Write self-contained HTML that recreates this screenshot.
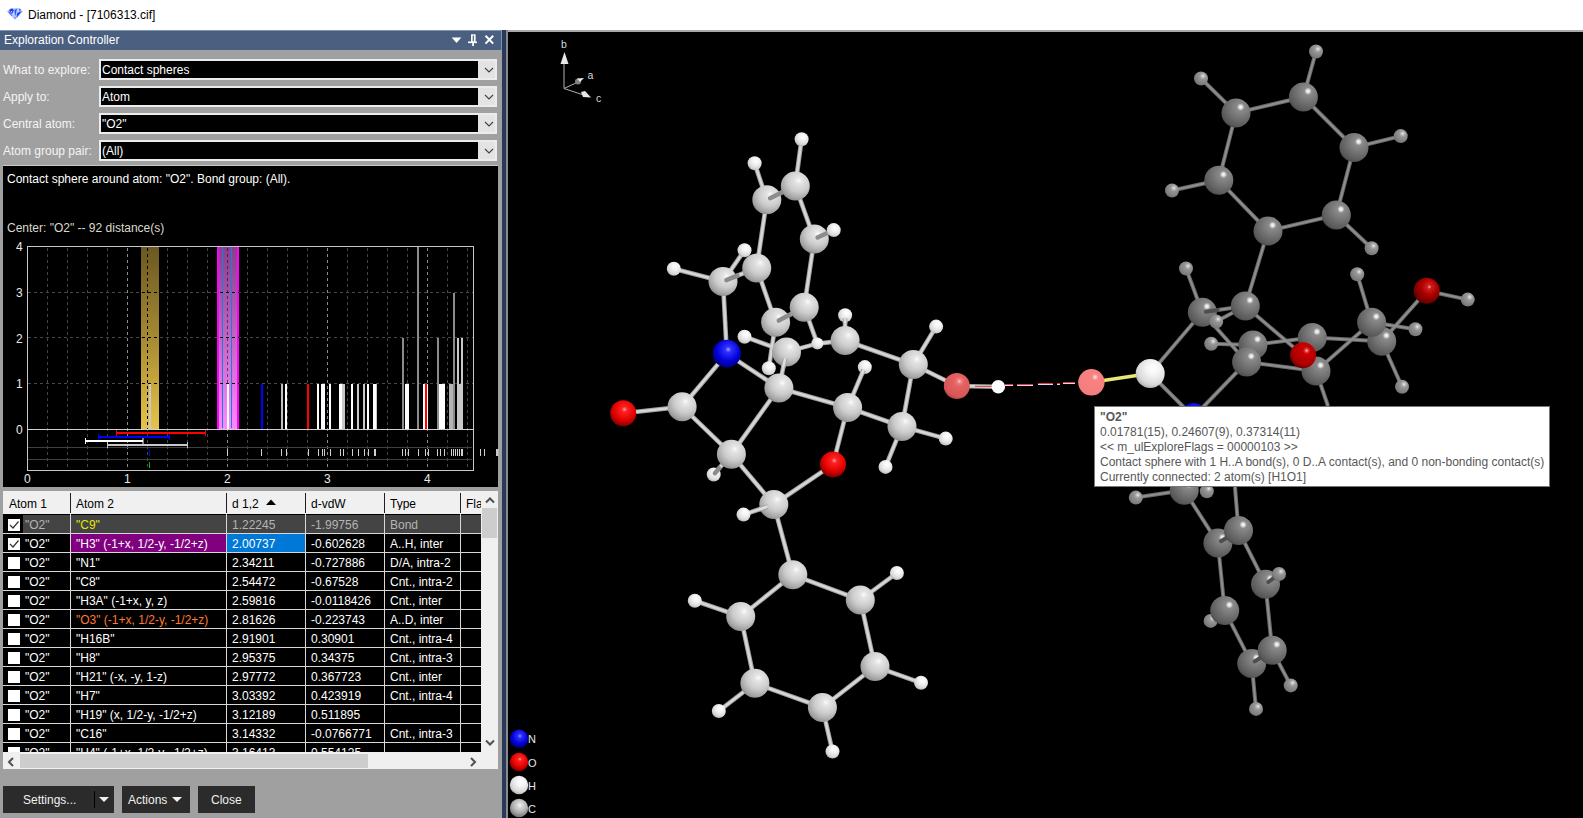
<!DOCTYPE html><html><head><meta charset="utf-8"><style>
*{box-sizing:border-box}
body{margin:0;width:1583px;height:818px;overflow:hidden;position:relative;background:#fff;font-family:"Liberation Sans", sans-serif;font-size:12px}
.a{position:absolute}
.t{position:absolute;white-space:nowrap;line-height:1}
.combo{position:absolute;left:99px;width:398px;height:21px;background:#e3e3e3;border:2px solid #ececec}
.combo .in{position:absolute;left:0;top:0;width:377px;height:17px;background:#000;color:#fff}
.combo .in span{position:absolute;left:1px;top:3px;line-height:1}
.combo svg{position:absolute;left:383px;top:6px}
.lbl{position:absolute;left:3px;color:#f4f4f4;line-height:1}
.btn{position:absolute;top:786px;height:27px;background:#2b2b2b;color:#f0f0f0}
.btn span{position:absolute;top:8px;line-height:1}
</style></head><body>
<div class="a" style="left:0;top:0;width:1583px;height:30px;background:#fff"></div>
<svg class="a" style="left:0;top:0" width="30" height="30" viewBox="0 0 30 30">
<polygon points="7,11.5 10.5,8 19.5,8 23,11.5 15,19.8" fill="#b8d4ff"/>
<polygon points="9,10 12,8.5 14,10 12,14 10,12" fill="#3030e0"/>
<polygon points="7.5,11.5 10,12 13,16.5 11,15.5" fill="#5070ff"/>
<polygon points="14.5,10 17,8.5 16,13 15,17" fill="#2a50ff"/>
<polygon points="17,13 22,11 16.5,18" fill="#1f45ff"/>
<polygon points="19,8.5 21,9.5 19.5,12" fill="#4060ff"/>
<polygon points="13.5,17 16,17 15,19.8" fill="#9a8cff"/>
<polygon points="10.5,11 12.5,11.5 11.5,12.5" fill="#e8f4ff"/>
</svg>
<div class="t" style="left:28px;top:9px;font-size:12px;color:#000">Diamond - [7106313.cif]</div>
<div class="a" style="left:0;top:30px;width:502px;height:788px;background:#a0a0a0"></div>
<div class="a" style="left:0;top:30px;width:502px;height:20px;background:#4b5f80;border-top:1px solid #7d93b8"></div>
<div class="a" style="left:501px;top:30px;width:1px;height:20px;background:#7d93b8"></div>
<div class="t" style="left:4px;top:34px;color:#fff">Exploration Controller</div>
<svg class="a" style="left:450px;top:34px" width="48" height="13" viewBox="0 0 48 13">
<polygon points="1.7,3.5 11.3,3.5 6.5,9" fill="#fff"/>
<rect x="21" y="0.3" width="4.6" height="7.6" fill="#fff"/><rect x="22.7" y="1.5" width="1.2" height="5.6" fill="#4b5f80"/>
<rect x="18" y="7.5" width="9" height="1.6" fill="#fff"/><rect x="22.2" y="9" width="1.8" height="3" fill="#fff"/>
<path d="M35.5 1.8 L43.2 9.6 M43.2 1.8 L35.5 9.6" stroke="#fff" stroke-width="2"/>
</svg>
<div class="lbl" style="top:64px">What to explore:</div>
<div class="combo" style="top:59px"><div class="in"><span>Contact spheres</span></div><svg width="10" height="6" viewBox="0 0 10 6"><path d="M1 1 L5 5 L9 1" stroke="#404040" stroke-width="1.1" fill="none"/></svg></div>
<div class="lbl" style="top:91px">Apply to:</div>
<div class="combo" style="top:86px"><div class="in"><span>Atom</span></div><svg width="10" height="6" viewBox="0 0 10 6"><path d="M1 1 L5 5 L9 1" stroke="#404040" stroke-width="1.1" fill="none"/></svg></div>
<div class="lbl" style="top:118px">Central atom:</div>
<div class="combo" style="top:113px"><div class="in"><span>"O2"</span></div><svg width="10" height="6" viewBox="0 0 10 6"><path d="M1 1 L5 5 L9 1" stroke="#404040" stroke-width="1.1" fill="none"/></svg></div>
<div class="lbl" style="top:145px">Atom group pair:</div>
<div class="combo" style="top:140px"><div class="in"><span>(All)</span></div><svg width="10" height="6" viewBox="0 0 10 6"><path d="M1 1 L5 5 L9 1" stroke="#404040" stroke-width="1.1" fill="none"/></svg></div>
<div class="a" style="left:3px;top:165px;width:495px;height:322px;background:#000;border-top:1px solid #c8c8c8"></div>
<div class="t" style="left:7px;top:173px;color:#fff">Contact sphere around atom: "O2". Bond group: (All).</div>
<div class="t" style="left:7px;top:222px;color:#dcd8cc">Center: "O2" -- 92 distance(s)</div>
<svg class="a" style="left:0;top:0" width="502" height="500" viewBox="0 0 502 500">
<defs><linearGradient id="gold" x1="0" y1="0" x2="0" y2="1"><stop offset="0" stop-color="#6a5822"/><stop offset="0.5" stop-color="#a68a32"/><stop offset="1" stop-color="#e6c44a"/></linearGradient>
<linearGradient id="mag" x1="0" y1="0" x2="0" y2="1"><stop offset="0" stop-color="#8a3e8a"/><stop offset="0.5" stop-color="#c464c4"/><stop offset="1" stop-color="#ff88ff"/></linearGradient><clipPath id="barclip"><rect x="141" y="240" width="18" height="200"/><rect x="217" y="240" width="22" height="200"/></clipPath></defs>
<line x1="47.5" y1="248" x2="47.5" y2="470" stroke="#454545" stroke-width="1" stroke-dasharray="3,3"/>
<line x1="67.5" y1="248" x2="67.5" y2="470" stroke="#454545" stroke-width="1" stroke-dasharray="3,3"/>
<line x1="87.5" y1="248" x2="87.5" y2="470" stroke="#454545" stroke-width="1" stroke-dasharray="3,3"/>
<line x1="107.5" y1="248" x2="107.5" y2="470" stroke="#454545" stroke-width="1" stroke-dasharray="3,3"/>
<line x1="127.5" y1="248" x2="127.5" y2="470" stroke="#8a8a8a" stroke-width="1" stroke-dasharray="3,3"/>
<line x1="147.5" y1="248" x2="147.5" y2="470" stroke="#454545" stroke-width="1" stroke-dasharray="3,3"/>
<line x1="167.5" y1="248" x2="167.5" y2="470" stroke="#454545" stroke-width="1" stroke-dasharray="3,3"/>
<line x1="187.5" y1="248" x2="187.5" y2="470" stroke="#454545" stroke-width="1" stroke-dasharray="3,3"/>
<line x1="207.5" y1="248" x2="207.5" y2="470" stroke="#454545" stroke-width="1" stroke-dasharray="3,3"/>
<line x1="227.5" y1="248" x2="227.5" y2="470" stroke="#8a8a8a" stroke-width="1" stroke-dasharray="3,3"/>
<line x1="247.5" y1="248" x2="247.5" y2="470" stroke="#454545" stroke-width="1" stroke-dasharray="3,3"/>
<line x1="267.5" y1="248" x2="267.5" y2="470" stroke="#454545" stroke-width="1" stroke-dasharray="3,3"/>
<line x1="287.5" y1="248" x2="287.5" y2="470" stroke="#454545" stroke-width="1" stroke-dasharray="3,3"/>
<line x1="307.5" y1="248" x2="307.5" y2="470" stroke="#454545" stroke-width="1" stroke-dasharray="3,3"/>
<line x1="327.5" y1="248" x2="327.5" y2="470" stroke="#8a8a8a" stroke-width="1" stroke-dasharray="3,3"/>
<line x1="347.5" y1="248" x2="347.5" y2="470" stroke="#454545" stroke-width="1" stroke-dasharray="3,3"/>
<line x1="367.5" y1="248" x2="367.5" y2="470" stroke="#454545" stroke-width="1" stroke-dasharray="3,3"/>
<line x1="387.5" y1="248" x2="387.5" y2="470" stroke="#454545" stroke-width="1" stroke-dasharray="3,3"/>
<line x1="407.5" y1="248" x2="407.5" y2="470" stroke="#454545" stroke-width="1" stroke-dasharray="3,3"/>
<line x1="427.5" y1="248" x2="427.5" y2="470" stroke="#8a8a8a" stroke-width="1" stroke-dasharray="3,3"/>
<line x1="447.5" y1="248" x2="447.5" y2="470" stroke="#454545" stroke-width="1" stroke-dasharray="3,3"/>
<line x1="467.5" y1="248" x2="467.5" y2="470" stroke="#454545" stroke-width="1" stroke-dasharray="3,3"/>
<line x1="28" y1="383.5" x2="473" y2="383.5" stroke="#484848" stroke-width="1" stroke-dasharray="3,3"/>
<line x1="28" y1="337.5" x2="473" y2="337.5" stroke="#484848" stroke-width="1" stroke-dasharray="3,3"/>
<line x1="28" y1="292.5" x2="473" y2="292.5" stroke="#484848" stroke-width="1" stroke-dasharray="3,3"/>
<rect x="141" y="247" width="18" height="182" fill="url(#gold)"/>
<line x1="147.5" y1="248" x2="147.5" y2="429" stroke="#000" stroke-dasharray="3,3"/>
<rect x="149" y="384" width="2" height="45" fill="#c8c8c8"/>
<rect x="217" y="247" width="22" height="182" fill="url(#mag)"/>
<rect x="217" y="247" width="2" height="182" fill="#ff00ff"/><rect x="237" y="247" width="2" height="182" fill="#ff00ff"/>
<line x1="227.5" y1="248" x2="227.5" y2="429" stroke="#000" stroke-opacity="0.5" stroke-dasharray="3,3"/>
<line x1="222.5" y1="247" x2="222.5" y2="428" stroke="#1a7ee0"/><line x1="231.5" y1="247" x2="231.5" y2="428" stroke="#1a7ee0"/>
<rect x="227" y="384" width="2" height="45" fill="#fff"/>
<line x1="28" y1="383.5" x2="473" y2="383.5" stroke="#000" stroke-dasharray="3,3" stroke-dashoffset="0" clip-path="url(#barclip)"/>
<line x1="28" y1="337.5" x2="473" y2="337.5" stroke="#000" stroke-dasharray="3,3" stroke-dashoffset="0" clip-path="url(#barclip)"/>
<line x1="28" y1="292.5" x2="473" y2="292.5" stroke="#000" stroke-dasharray="3,3" stroke-dashoffset="0" clip-path="url(#barclip)"/>
<rect x="261" y="384" width="2" height="45" fill="#0000ff"/>
<rect x="281" y="384" width="2" height="45" fill="#c0c0c0"/>
<rect x="285" y="384" width="2" height="45" fill="#fff"/>
<rect x="307" y="384" width="2" height="45" fill="#ff0000"/>
<rect x="317" y="384" width="2" height="45" fill="#fff"/>
<rect x="321" y="384" width="4" height="45" fill="#fff"/>
<rect x="329" y="384" width="2" height="45" fill="#fff"/>
<rect x="339" y="384" width="3" height="45" fill="#fff"/>
<rect x="342" y="384" width="3" height="45" fill="#c8c8c8"/>
<rect x="351" y="384" width="2" height="45" fill="#fff"/>
<rect x="357" y="384" width="2" height="45" fill="#c8c8c8"/>
<rect x="363" y="384" width="2" height="45" fill="#c8c8c8"/>
<rect x="367" y="384" width="2" height="45" fill="#fff"/>
<rect x="373" y="384" width="3" height="45" fill="#fff"/>
<rect x="376" y="384" width="1" height="45" fill="#c8c8c8"/>
<rect x="402" y="338" width="2" height="91" fill="#8c8c8c"/>
<rect x="405" y="384" width="4" height="45" fill="#fff"/>
<rect x="417" y="247" width="2" height="182" fill="#8c8c8c"/>
<rect x="423" y="384" width="5" height="45" fill="#fff"/>
<rect x="425" y="384" width="2" height="45" fill="#ff0000"/>
<rect x="437" y="338" width="2" height="91" fill="#8c8c8c"/>
<rect x="439" y="384" width="6" height="45" fill="#fff"/>
<rect x="449" y="384" width="5" height="45" fill="#b4b4b4"/>
<rect x="453" y="293" width="2" height="136" fill="#8c8c8c"/>
<rect x="457" y="384" width="5" height="45" fill="#c8c8c8"/>
<rect x="457" y="338" width="2" height="91" fill="#c8c8c8"/>
<rect x="461" y="338" width="2" height="91" fill="#c8c8c8"/>
<rect x="27.5" y="246.5" width="446" height="224" fill="none" stroke="#c8c8c8"/>
<line x1="27" y1="429.5" x2="474" y2="429.5" stroke="#d0d0d0"/>
<line x1="28" y1="447.5" x2="472" y2="447.5" stroke="#404040"/><line x1="28" y1="459.5" x2="472" y2="459.5" stroke="#404040"/>
<line x1="116.5" y1="433" x2="205.5" y2="433" stroke="#ff0000" stroke-width="2"/>
<line x1="116.5" y1="430" x2="116.5" y2="436" stroke="#ff0000" stroke-width="1"/><line x1="205.5" y1="430" x2="205.5" y2="436" stroke="#ff0000" stroke-width="1"/>
<line x1="98.5" y1="437" x2="169.5" y2="437" stroke="#0000ff" stroke-width="2"/>
<line x1="98.5" y1="434" x2="98.5" y2="440" stroke="#0000ff" stroke-width="1"/><line x1="169.5" y1="434" x2="169.5" y2="440" stroke="#0000ff" stroke-width="1"/>
<line x1="85.5" y1="441" x2="143" y2="441" stroke="#ffffff" stroke-width="2"/>
<line x1="85.5" y1="438" x2="85.5" y2="444" stroke="#ffffff" stroke-width="1"/><line x1="143" y1="438" x2="143" y2="444" stroke="#ffffff" stroke-width="1"/>
<line x1="107.5" y1="445" x2="187.5" y2="445" stroke="#c8c8c8" stroke-width="2"/>
<line x1="107.5" y1="442" x2="107.5" y2="448" stroke="#c8c8c8" stroke-width="1"/><line x1="187.5" y1="442" x2="187.5" y2="448" stroke="#c8c8c8" stroke-width="1"/>
<rect x="227" y="449" width="1" height="7" fill="#d0d0d0"/>
<rect x="261" y="449" width="1" height="7" fill="#d0d0d0"/>
<rect x="281" y="449" width="1" height="7" fill="#d0d0d0"/>
<rect x="286" y="449" width="1" height="7" fill="#d0d0d0"/>
<rect x="308" y="449" width="1" height="7" fill="#d0d0d0"/>
<rect x="318" y="449" width="1" height="7" fill="#d0d0d0"/>
<rect x="322" y="449" width="1" height="7" fill="#d0d0d0"/>
<rect x="324" y="449" width="1" height="7" fill="#d0d0d0"/>
<rect x="330" y="449" width="1" height="7" fill="#d0d0d0"/>
<rect x="340" y="449" width="1" height="7" fill="#d0d0d0"/>
<rect x="343" y="449" width="1" height="7" fill="#d0d0d0"/>
<rect x="352" y="449" width="1" height="7" fill="#d0d0d0"/>
<rect x="358" y="449" width="1" height="7" fill="#d0d0d0"/>
<rect x="364" y="449" width="1" height="7" fill="#d0d0d0"/>
<rect x="368" y="449" width="1" height="7" fill="#d0d0d0"/>
<rect x="374" y="449" width="1" height="7" fill="#d0d0d0"/>
<rect x="375" y="449" width="1" height="7" fill="#d0d0d0"/>
<rect x="402" y="449" width="1" height="7" fill="#d0d0d0"/>
<rect x="405" y="449" width="1" height="7" fill="#d0d0d0"/>
<rect x="408" y="449" width="1" height="7" fill="#d0d0d0"/>
<rect x="418" y="449" width="1" height="7" fill="#d0d0d0"/>
<rect x="425" y="449" width="1" height="7" fill="#d0d0d0"/>
<rect x="428" y="449" width="1" height="7" fill="#d0d0d0"/>
<rect x="437" y="449" width="1" height="7" fill="#d0d0d0"/>
<rect x="440" y="449" width="1" height="7" fill="#d0d0d0"/>
<rect x="444" y="449" width="1" height="7" fill="#d0d0d0"/>
<rect x="451" y="449" width="1" height="7" fill="#d0d0d0"/>
<rect x="453" y="449" width="1" height="7" fill="#d0d0d0"/>
<rect x="455" y="449" width="1" height="7" fill="#d0d0d0"/>
<rect x="457" y="449" width="1" height="7" fill="#d0d0d0"/>
<rect x="459" y="449" width="1" height="7" fill="#d0d0d0"/>
<rect x="461" y="449" width="1" height="7" fill="#d0d0d0"/>
<rect x="462" y="449" width="1" height="7" fill="#d0d0d0"/>
<rect x="480" y="449" width="1" height="7" fill="#d0d0d0"/>
<rect x="484" y="449" width="1" height="7" fill="#d0d0d0"/>
<rect x="496" y="449" width="2.5" height="7" fill="#c8c8c8"/>
<line x1="149.5" y1="450" x2="149.5" y2="456" stroke="#0000ff"/><line x1="149.5" y1="462" x2="149.5" y2="468" stroke="#00c000"/>
</svg>
<div class="t" style="left:16px;top:424px;color:#e8e8e8">0</div>
<div class="t" style="left:16px;top:378px;color:#e8e8e8">1</div>
<div class="t" style="left:16px;top:333px;color:#e8e8e8">2</div>
<div class="t" style="left:16px;top:287px;color:#e8e8e8">3</div>
<div class="t" style="left:16px;top:241px;color:#e8e8e8">4</div>
<div class="t" style="left:24px;top:473px;color:#e8e8e8">0</div>
<div class="t" style="left:124px;top:473px;color:#e8e8e8">1</div>
<div class="t" style="left:224px;top:473px;color:#e8e8e8">2</div>
<div class="t" style="left:324px;top:473px;color:#e8e8e8">3</div>
<div class="t" style="left:424px;top:473px;color:#e8e8e8">4</div>
<div class="a" style="left:3px;top:491px;width:495px;height:278px;background:#f0f0f0"></div>
<div class="t" style="left:9px;top:498px;color:#000;max-width:472px;overflow:hidden">Atom 1</div>
<div class="t" style="left:76px;top:498px;color:#000;max-width:405px;overflow:hidden">Atom 2</div>
<div class="t" style="left:232px;top:498px;color:#000;max-width:249px;overflow:hidden">d 1,2</div>
<div class="t" style="left:311px;top:498px;color:#000;max-width:170px;overflow:hidden">d-vdW</div>
<div class="t" style="left:390px;top:498px;color:#000;max-width:91px;overflow:hidden">Type</div>
<div class="t" style="left:466px;top:498px;color:#000;max-width:15px;overflow:hidden">Fla</div>
<div class="a" style="left:70px;top:493px;width:1px;height:20px;background:#202020"></div>
<div class="a" style="left:226px;top:493px;width:1px;height:20px;background:#202020"></div>
<div class="a" style="left:305px;top:493px;width:1px;height:20px;background:#202020"></div>
<div class="a" style="left:384px;top:493px;width:1px;height:20px;background:#202020"></div>
<div class="a" style="left:460px;top:493px;width:1px;height:20px;background:#202020"></div>
<svg class="a" style="left:265px;top:498px" width="12" height="8"><polygon points="1,7 6,1.5 11,7" fill="#000"/></svg>
<div class="a" style="left:3px;top:514px;width:478px;height:238px;background:#000;overflow:hidden">
<div class="a" style="left:20px;top:1px;width:459px;height:19px;background:#444"></div>
<div class="a" style="left:0;top:19px;width:478px;height:1px;background:#d8d8d8"></div>
<div class="t" style="left:22px;top:5px;color:#b4b4b4">"O2"</div>
<div class="t" style="left:73px;top:5px;color:#e6e600">"C9"</div>
<div class="t" style="left:229px;top:5px;color:#b4b4b4">1.22245</div>
<div class="t" style="left:308px;top:5px;color:#b4b4b4">-1.99756</div>
<div class="t" style="left:387px;top:5px;color:#b4b4b4">Bond</div>
<div class="a" style="left:5px;top:5px;width:12px;height:12px;background:#fff"></div>
<svg class="a" style="left:5px;top:5px" width="12" height="12"><path d="M2 6 L5 9 L10.5 2.5" stroke="#333" stroke-width="1.2" fill="none"/></svg>
<div class="a" style="left:68px;top:20px;width:155px;height:19px;background:#800080"></div>
<div class="a" style="left:224px;top:20px;width:78px;height:19px;background:#0078d7"></div>
<div class="a" style="left:0;top:38px;width:478px;height:1px;background:#d8d8d8"></div>
<div class="t" style="left:22px;top:24px;color:#fff">"O2"</div>
<div class="t" style="left:73px;top:24px;color:#fff">"H3" (-1+x, 1/2-y, -1/2+z)</div>
<div class="t" style="left:229px;top:24px;color:#fff">2.00737</div>
<div class="t" style="left:308px;top:24px;color:#fff">-0.602628</div>
<div class="t" style="left:387px;top:24px;color:#fff">A..H, inter</div>
<div class="a" style="left:5px;top:24px;width:12px;height:12px;background:#fff"></div>
<svg class="a" style="left:5px;top:24px" width="12" height="12"><path d="M2 6 L5 9 L10.5 2.5" stroke="#333" stroke-width="1.2" fill="none"/></svg>
<div class="a" style="left:0;top:57px;width:478px;height:1px;background:#d8d8d8"></div>
<div class="t" style="left:22px;top:43px;color:#fff">"O2"</div>
<div class="t" style="left:73px;top:43px;color:#fff">"N1"</div>
<div class="t" style="left:229px;top:43px;color:#fff">2.34211</div>
<div class="t" style="left:308px;top:43px;color:#fff">-0.727886</div>
<div class="t" style="left:387px;top:43px;color:#fff">D/A, intra-2</div>
<div class="a" style="left:5px;top:43px;width:12px;height:12px;background:#fff"></div>
<div class="a" style="left:0;top:76px;width:478px;height:1px;background:#d8d8d8"></div>
<div class="t" style="left:22px;top:62px;color:#fff">"O2"</div>
<div class="t" style="left:73px;top:62px;color:#fff">"C8"</div>
<div class="t" style="left:229px;top:62px;color:#fff">2.54472</div>
<div class="t" style="left:308px;top:62px;color:#fff">-0.67528</div>
<div class="t" style="left:387px;top:62px;color:#fff">Cnt., intra-2</div>
<div class="a" style="left:5px;top:62px;width:12px;height:12px;background:#fff"></div>
<div class="a" style="left:0;top:95px;width:478px;height:1px;background:#d8d8d8"></div>
<div class="t" style="left:22px;top:81px;color:#fff">"O2"</div>
<div class="t" style="left:73px;top:81px;color:#fff">"H3A" (-1+x, y, z)</div>
<div class="t" style="left:229px;top:81px;color:#fff">2.59816</div>
<div class="t" style="left:308px;top:81px;color:#fff">-0.0118426</div>
<div class="t" style="left:387px;top:81px;color:#fff">Cnt., inter</div>
<div class="a" style="left:5px;top:81px;width:12px;height:12px;background:#fff"></div>
<div class="a" style="left:0;top:114px;width:478px;height:1px;background:#d8d8d8"></div>
<div class="t" style="left:22px;top:100px;color:#fff">"O2"</div>
<div class="t" style="left:73px;top:100px;color:#ff7a30">"O3" (-1+x, 1/2-y, -1/2+z)</div>
<div class="t" style="left:229px;top:100px;color:#fff">2.81626</div>
<div class="t" style="left:308px;top:100px;color:#fff">-0.223743</div>
<div class="t" style="left:387px;top:100px;color:#fff">A..D, inter</div>
<div class="a" style="left:5px;top:100px;width:12px;height:12px;background:#fff"></div>
<div class="a" style="left:0;top:133px;width:478px;height:1px;background:#d8d8d8"></div>
<div class="t" style="left:22px;top:119px;color:#fff">"O2"</div>
<div class="t" style="left:73px;top:119px;color:#fff">"H16B"</div>
<div class="t" style="left:229px;top:119px;color:#fff">2.91901</div>
<div class="t" style="left:308px;top:119px;color:#fff">0.30901</div>
<div class="t" style="left:387px;top:119px;color:#fff">Cnt., intra-4</div>
<div class="a" style="left:5px;top:119px;width:12px;height:12px;background:#fff"></div>
<div class="a" style="left:0;top:152px;width:478px;height:1px;background:#d8d8d8"></div>
<div class="t" style="left:22px;top:138px;color:#fff">"O2"</div>
<div class="t" style="left:73px;top:138px;color:#fff">"H8"</div>
<div class="t" style="left:229px;top:138px;color:#fff">2.95375</div>
<div class="t" style="left:308px;top:138px;color:#fff">0.34375</div>
<div class="t" style="left:387px;top:138px;color:#fff">Cnt., intra-3</div>
<div class="a" style="left:5px;top:138px;width:12px;height:12px;background:#fff"></div>
<div class="a" style="left:0;top:171px;width:478px;height:1px;background:#d8d8d8"></div>
<div class="t" style="left:22px;top:157px;color:#fff">"O2"</div>
<div class="t" style="left:73px;top:157px;color:#fff">"H21" (-x, -y, 1-z)</div>
<div class="t" style="left:229px;top:157px;color:#fff">2.97772</div>
<div class="t" style="left:308px;top:157px;color:#fff">0.367723</div>
<div class="t" style="left:387px;top:157px;color:#fff">Cnt., inter</div>
<div class="a" style="left:5px;top:157px;width:12px;height:12px;background:#fff"></div>
<div class="a" style="left:0;top:190px;width:478px;height:1px;background:#d8d8d8"></div>
<div class="t" style="left:22px;top:176px;color:#fff">"O2"</div>
<div class="t" style="left:73px;top:176px;color:#fff">"H7"</div>
<div class="t" style="left:229px;top:176px;color:#fff">3.03392</div>
<div class="t" style="left:308px;top:176px;color:#fff">0.423919</div>
<div class="t" style="left:387px;top:176px;color:#fff">Cnt., intra-4</div>
<div class="a" style="left:5px;top:176px;width:12px;height:12px;background:#fff"></div>
<div class="a" style="left:0;top:209px;width:478px;height:1px;background:#d8d8d8"></div>
<div class="t" style="left:22px;top:195px;color:#fff">"O2"</div>
<div class="t" style="left:73px;top:195px;color:#fff">"H19" (x, 1/2-y, -1/2+z)</div>
<div class="t" style="left:229px;top:195px;color:#fff">3.12189</div>
<div class="t" style="left:308px;top:195px;color:#fff">0.511895</div>
<div class="t" style="left:387px;top:195px;color:#fff"></div>
<div class="a" style="left:5px;top:195px;width:12px;height:12px;background:#fff"></div>
<div class="a" style="left:0;top:228px;width:478px;height:1px;background:#d8d8d8"></div>
<div class="t" style="left:22px;top:214px;color:#fff">"O2"</div>
<div class="t" style="left:73px;top:214px;color:#fff">"C16"</div>
<div class="t" style="left:229px;top:214px;color:#fff">3.14332</div>
<div class="t" style="left:308px;top:214px;color:#fff">-0.0766771</div>
<div class="t" style="left:387px;top:214px;color:#fff">Cnt., intra-3</div>
<div class="a" style="left:5px;top:214px;width:12px;height:12px;background:#fff"></div>
<div class="a" style="left:0;top:247px;width:478px;height:1px;background:#d8d8d8"></div>
<div class="t" style="left:22px;top:233px;color:#fff">"O2"</div>
<div class="t" style="left:73px;top:233px;color:#fff">"H4" (-1+x, 1/2-y, -1/2+z)</div>
<div class="t" style="left:229px;top:233px;color:#fff">3.16413</div>
<div class="t" style="left:308px;top:233px;color:#fff">0.554125</div>
<div class="t" style="left:387px;top:233px;color:#fff"></div>
<div class="a" style="left:5px;top:233px;width:12px;height:12px;background:#fff"></div>
<div class="a" style="left:67px;top:0;width:1px;height:239px;background:#d8d8d8"></div>
<div class="a" style="left:223px;top:0;width:1px;height:239px;background:#d8d8d8"></div>
<div class="a" style="left:302px;top:0;width:1px;height:239px;background:#d8d8d8"></div>
<div class="a" style="left:381px;top:0;width:1px;height:239px;background:#d8d8d8"></div>
<div class="a" style="left:457px;top:0;width:1px;height:239px;background:#d8d8d8"></div>
</div>
<svg class="a" style="left:484px;top:496px" width="12" height="8"><path d="M2 6.5 L6 2.5 L10 6.5" stroke="#505050" stroke-width="2" fill="none"/></svg>
<div class="a" style="left:482px;top:508px;width:15px;height:30px;background:#cdcdcd"></div>
<svg class="a" style="left:484px;top:739px" width="12" height="8"><path d="M2 1.5 L6 5.5 L10 1.5" stroke="#505050" stroke-width="2" fill="none"/></svg>
<svg class="a" style="left:7px;top:756px" width="8" height="12"><path d="M6 2 L2 6 L6 10" stroke="#505050" stroke-width="2" fill="none"/></svg>
<div class="a" style="left:20px;top:754px;width:348px;height:14px;background:#cdcdcd"></div>
<svg class="a" style="left:469px;top:756px" width="8" height="12"><path d="M2 2 L6 6 L2 10" stroke="#505050" stroke-width="2" fill="none"/></svg>
<div class="btn" style="left:3px;width:111px"><span style="left:20px">Settings...</span><div class="a" style="left:91px;top:5px;width:1px;height:17px;background:#000"></div><svg class="a" style="left:95px;top:10px" width="12" height="8"><polygon points="1,1 11,1 6,6" fill="#f0f0f0"/></svg></div>
<div class="btn" style="left:122px;width:68px"><span style="left:6px">Actions</span><svg class="a" style="left:49px;top:10px" width="12" height="8"><polygon points="1,1 11,1 6,6" fill="#f0f0f0"/></svg></div>
<div class="btn" style="left:198px;width:57px"><span style="left:13px">Close</span></div>
<div class="a" style="left:502px;top:30px;width:4px;height:788px;background:#29395a"></div>
<div class="a" style="left:506px;top:30px;width:2px;height:788px;background:#8a8a8a"></div>
<div class="a" style="left:508px;top:30px;width:1075px;height:788px;background:#000;border-top:2px solid #a8a8a8"></div>
<svg class="a" style="left:0;top:0" width="1583" height="818" viewBox="0 0 1583 818">
<defs>
<radialGradient id="gC" cx="0.62" cy="0.32" fx="0.62" fy="0.32" r="0.78"><stop offset="0" stop-color="#fbfbfb"/><stop offset="0.15" stop-color="#e4e4e4"/><stop offset="0.5" stop-color="#cccccc"/><stop offset="0.8" stop-color="#a4a4a4"/><stop offset="1" stop-color="#787878"/></radialGradient>
<radialGradient id="gH" cx="0.6" cy="0.33" fx="0.6" fy="0.33" r="0.78"><stop offset="0" stop-color="#ffffff"/><stop offset="0.3" stop-color="#f4f4f4"/><stop offset="0.7" stop-color="#d8d8d8"/><stop offset="1" stop-color="#9a9a9a"/></radialGradient>
<radialGradient id="gN" cx="0.55" cy="0.35" fx="0.55" fy="0.35" r="0.7"><stop offset="0" stop-color="#a0a0ff"/><stop offset="0.15" stop-color="#3030ff"/><stop offset="0.6" stop-color="#0000d8"/><stop offset="1" stop-color="#000068"/></radialGradient>
<radialGradient id="gO" cx="0.55" cy="0.35" fx="0.55" fy="0.35" r="0.7"><stop offset="0" stop-color="#ffa0a0"/><stop offset="0.15" stop-color="#ff2020"/><stop offset="0.6" stop-color="#e00000"/><stop offset="1" stop-color="#700000"/></radialGradient>
<radialGradient id="gOp" cx="0.6" cy="0.32" fx="0.6" fy="0.32" r="0.78"><stop offset="0" stop-color="#ffd0d0"/><stop offset="0.1" stop-color="#f08080"/><stop offset="0.25" stop-color="#e46262"/><stop offset="0.75" stop-color="#d85656"/><stop offset="1" stop-color="#a03a3a"/></radialGradient>
<radialGradient id="gop" cx="0.64" cy="0.3" fx="0.64" fy="0.3" r="0.8"><stop offset="0" stop-color="#ffe8e8"/><stop offset="0.08" stop-color="#fcb0b0"/><stop offset="0.16" stop-color="#f88282"/><stop offset="0.9" stop-color="#f47c7c"/><stop offset="1" stop-color="#e07070"/></radialGradient>
<radialGradient id="gHw" cx="0.5" cy="0.5" fx="0.5" fy="0.5" r="0.6"><stop offset="0" stop-color="#ffffff"/><stop offset="0.85" stop-color="#fcfcfc"/><stop offset="1" stop-color="#e8e8e8"/></radialGradient>
<radialGradient id="gc" cx="0.66" cy="0.3" fx="0.66" fy="0.3" r="0.8"><stop offset="0" stop-color="#ffffff"/><stop offset="0.07" stop-color="#e0e0e0"/><stop offset="0.16" stop-color="#8a8a8a"/><stop offset="0.55" stop-color="#6e6e6e"/><stop offset="0.85" stop-color="#585858"/><stop offset="1" stop-color="#3e3e3e"/></radialGradient>
<radialGradient id="gh" cx="0.64" cy="0.32" fx="0.64" fy="0.32" r="0.8"><stop offset="0" stop-color="#f4f4f4"/><stop offset="0.12" stop-color="#c0c0c0"/><stop offset="0.3" stop-color="#969696"/><stop offset="0.8" stop-color="#7a7a7a"/><stop offset="1" stop-color="#555"/></radialGradient>
<radialGradient id="go" cx="0.6" cy="0.35" fx="0.6" fy="0.35" r="0.75"><stop offset="0" stop-color="#ffb0b0"/><stop offset="0.1" stop-color="#d02020"/><stop offset="0.4" stop-color="#b00000"/><stop offset="1" stop-color="#500000"/></radialGradient>
<radialGradient id="go2" cx="0.64" cy="0.32" fx="0.64" fy="0.32" r="0.8"><stop offset="0" stop-color="#ffd0d0"/><stop offset="0.08" stop-color="#e04040"/><stop offset="0.18" stop-color="#cc0000"/><stop offset="0.7" stop-color="#a80000"/><stop offset="1" stop-color="#500000"/></radialGradient>
</defs>
<line x1="801.6" y1="139.2" x2="795.3" y2="185.9" stroke="#a0a0a0" stroke-width="4.6"/>
<line x1="754.6" y1="163.2" x2="766.8" y2="199.8" stroke="#a0a0a0" stroke-width="4.6"/>
<line x1="766.8" y1="199.8" x2="795.3" y2="185.9" stroke="#a0a0a0" stroke-width="4.6"/>
<line x1="795.3" y1="185.9" x2="814.3" y2="239" stroke="#a0a0a0" stroke-width="4.6"/>
<line x1="814.3" y1="239" x2="833.7" y2="230.1" stroke="#a0a0a0" stroke-width="4.6"/>
<line x1="814.3" y1="239" x2="804.2" y2="307.2" stroke="#a0a0a0" stroke-width="4.6"/>
<line x1="766.8" y1="199.8" x2="756.7" y2="268" stroke="#a0a0a0" stroke-width="4.6"/>
<line x1="723" y1="281.4" x2="744.5" y2="250.3" stroke="#a0a0a0" stroke-width="4.6"/>
<line x1="756.7" y1="268" x2="723" y2="281.4" stroke="#a0a0a0" stroke-width="4.6"/>
<line x1="723" y1="281.4" x2="673.8" y2="268.8" stroke="#a0a0a0" stroke-width="4.6"/>
<line x1="723" y1="281.4" x2="726.8" y2="353.7" stroke="#a0a0a0" stroke-width="4.6"/>
<line x1="756.7" y1="268" x2="775.6" y2="322.3" stroke="#a0a0a0" stroke-width="4.6"/>
<line x1="775.6" y1="322.3" x2="804.2" y2="307.2" stroke="#a0a0a0" stroke-width="4.6"/>
<line x1="804.2" y1="307.2" x2="817.3" y2="343.6" stroke="#a0a0a0" stroke-width="4.6"/>
<line x1="817.3" y1="343.6" x2="845.1" y2="340.5" stroke="#a0a0a0" stroke-width="4.6"/>
<line x1="786.5" y1="351.9" x2="817.3" y2="343.6" stroke="#a0a0a0" stroke-width="4.6"/>
<line x1="845.1" y1="340.5" x2="845.1" y2="315.3" stroke="#a0a0a0" stroke-width="4.6"/>
<line x1="845.1" y1="340.5" x2="913.3" y2="364.5" stroke="#a0a0a0" stroke-width="4.6"/>
<line x1="913.3" y1="364.5" x2="936.1" y2="326.6" stroke="#a0a0a0" stroke-width="4.6"/>
<line x1="913.3" y1="364.5" x2="956.8" y2="386" stroke="#a0a0a0" stroke-width="4.6"/>
<line x1="956.8" y1="386" x2="998.3" y2="386.7" stroke="#a0a0a0" stroke-width="4.6"/>
<line x1="913.3" y1="364.5" x2="902" y2="426.5" stroke="#a0a0a0" stroke-width="4.6"/>
<line x1="902" y1="426.5" x2="847.6" y2="407.5" stroke="#a0a0a0" stroke-width="4.6"/>
<line x1="902" y1="426.5" x2="945.7" y2="438.6" stroke="#a0a0a0" stroke-width="4.6"/>
<line x1="902" y1="426.5" x2="885.5" y2="466.9" stroke="#a0a0a0" stroke-width="4.6"/>
<line x1="847.6" y1="407.5" x2="864.8" y2="367.1" stroke="#a0a0a0" stroke-width="4.6"/>
<line x1="847.6" y1="407.5" x2="833" y2="464.4" stroke="#a0a0a0" stroke-width="4.6"/>
<line x1="847.6" y1="407.5" x2="778.9" y2="388" stroke="#a0a0a0" stroke-width="4.6"/>
<line x1="778.9" y1="388" x2="726.8" y2="353.7" stroke="#a0a0a0" stroke-width="4.6"/>
<line x1="778.9" y1="388" x2="786.5" y2="351.9" stroke="#a0a0a0" stroke-width="4.6"/>
<line x1="786.5" y1="351.9" x2="744.5" y2="336.7" stroke="#a0a0a0" stroke-width="4.6"/>
<line x1="775.6" y1="322.3" x2="768.8" y2="368.3" stroke="#a0a0a0" stroke-width="4.6"/>
<line x1="726.8" y1="353.7" x2="682.1" y2="406.7" stroke="#a0a0a0" stroke-width="4.6"/>
<line x1="682.1" y1="406.7" x2="623.2" y2="413.3" stroke="#a0a0a0" stroke-width="4.6"/>
<line x1="682.1" y1="406.7" x2="731.4" y2="454.2" stroke="#a0a0a0" stroke-width="4.6"/>
<line x1="731.4" y1="454.2" x2="778.9" y2="388" stroke="#a0a0a0" stroke-width="4.6"/>
<line x1="731.4" y1="454.2" x2="713.7" y2="474.5" stroke="#a0a0a0" stroke-width="4.6"/>
<line x1="731.4" y1="454.2" x2="773.8" y2="504.5" stroke="#a0a0a0" stroke-width="4.6"/>
<line x1="833" y1="464.4" x2="773.8" y2="504.5" stroke="#a0a0a0" stroke-width="4.6"/>
<line x1="773.8" y1="504.5" x2="743.5" y2="514.6" stroke="#a0a0a0" stroke-width="4.6"/>
<line x1="773.8" y1="504.5" x2="792.8" y2="574.8" stroke="#a0a0a0" stroke-width="4.6"/>
<line x1="792.8" y1="574.8" x2="740.7" y2="616.5" stroke="#a0a0a0" stroke-width="4.6"/>
<line x1="740.7" y1="616.5" x2="694.8" y2="600.8" stroke="#a0a0a0" stroke-width="4.6"/>
<line x1="792.8" y1="574.8" x2="860.3" y2="600" stroke="#a0a0a0" stroke-width="4.6"/>
<line x1="860.3" y1="600" x2="896.9" y2="573" stroke="#a0a0a0" stroke-width="4.6"/>
<line x1="860.3" y1="600" x2="875" y2="666.5" stroke="#a0a0a0" stroke-width="4.6"/>
<line x1="875" y1="666.5" x2="921" y2="682.8" stroke="#a0a0a0" stroke-width="4.6"/>
<line x1="740.7" y1="616.5" x2="754.9" y2="683.3" stroke="#a0a0a0" stroke-width="4.6"/>
<line x1="754.9" y1="683.3" x2="718.8" y2="711" stroke="#a0a0a0" stroke-width="4.6"/>
<line x1="754.9" y1="683.3" x2="822.4" y2="707.5" stroke="#a0a0a0" stroke-width="4.6"/>
<line x1="822.4" y1="707.5" x2="875" y2="666.5" stroke="#a0a0a0" stroke-width="4.6"/>
<line x1="822.4" y1="707.5" x2="832.5" y2="751.5" stroke="#a0a0a0" stroke-width="4.6"/>
<line x1="801.6" y1="139.2" x2="795.3" y2="185.9" stroke="#d6d6d6" stroke-width="2.6"/>
<line x1="754.6" y1="163.2" x2="766.8" y2="199.8" stroke="#d6d6d6" stroke-width="2.6"/>
<line x1="766.8" y1="199.8" x2="795.3" y2="185.9" stroke="#d6d6d6" stroke-width="2.6"/>
<line x1="795.3" y1="185.9" x2="814.3" y2="239" stroke="#d6d6d6" stroke-width="2.6"/>
<line x1="814.3" y1="239" x2="833.7" y2="230.1" stroke="#d6d6d6" stroke-width="2.6"/>
<line x1="814.3" y1="239" x2="804.2" y2="307.2" stroke="#d6d6d6" stroke-width="2.6"/>
<line x1="766.8" y1="199.8" x2="756.7" y2="268" stroke="#d6d6d6" stroke-width="2.6"/>
<line x1="723" y1="281.4" x2="744.5" y2="250.3" stroke="#d6d6d6" stroke-width="2.6"/>
<line x1="756.7" y1="268" x2="723" y2="281.4" stroke="#d6d6d6" stroke-width="2.6"/>
<line x1="723" y1="281.4" x2="673.8" y2="268.8" stroke="#d6d6d6" stroke-width="2.6"/>
<line x1="723" y1="281.4" x2="726.8" y2="353.7" stroke="#d6d6d6" stroke-width="2.6"/>
<line x1="756.7" y1="268" x2="775.6" y2="322.3" stroke="#d6d6d6" stroke-width="2.6"/>
<line x1="775.6" y1="322.3" x2="804.2" y2="307.2" stroke="#d6d6d6" stroke-width="2.6"/>
<line x1="804.2" y1="307.2" x2="817.3" y2="343.6" stroke="#d6d6d6" stroke-width="2.6"/>
<line x1="817.3" y1="343.6" x2="845.1" y2="340.5" stroke="#d6d6d6" stroke-width="2.6"/>
<line x1="786.5" y1="351.9" x2="817.3" y2="343.6" stroke="#d6d6d6" stroke-width="2.6"/>
<line x1="845.1" y1="340.5" x2="845.1" y2="315.3" stroke="#d6d6d6" stroke-width="2.6"/>
<line x1="845.1" y1="340.5" x2="913.3" y2="364.5" stroke="#d6d6d6" stroke-width="2.6"/>
<line x1="913.3" y1="364.5" x2="936.1" y2="326.6" stroke="#d6d6d6" stroke-width="2.6"/>
<line x1="913.3" y1="364.5" x2="956.8" y2="386" stroke="#d6d6d6" stroke-width="2.6"/>
<line x1="956.8" y1="386" x2="998.3" y2="386.7" stroke="#d6d6d6" stroke-width="2.6"/>
<line x1="913.3" y1="364.5" x2="902" y2="426.5" stroke="#d6d6d6" stroke-width="2.6"/>
<line x1="902" y1="426.5" x2="847.6" y2="407.5" stroke="#d6d6d6" stroke-width="2.6"/>
<line x1="902" y1="426.5" x2="945.7" y2="438.6" stroke="#d6d6d6" stroke-width="2.6"/>
<line x1="902" y1="426.5" x2="885.5" y2="466.9" stroke="#d6d6d6" stroke-width="2.6"/>
<line x1="847.6" y1="407.5" x2="864.8" y2="367.1" stroke="#d6d6d6" stroke-width="2.6"/>
<line x1="847.6" y1="407.5" x2="833" y2="464.4" stroke="#d6d6d6" stroke-width="2.6"/>
<line x1="847.6" y1="407.5" x2="778.9" y2="388" stroke="#d6d6d6" stroke-width="2.6"/>
<line x1="778.9" y1="388" x2="726.8" y2="353.7" stroke="#d6d6d6" stroke-width="2.6"/>
<line x1="778.9" y1="388" x2="786.5" y2="351.9" stroke="#d6d6d6" stroke-width="2.6"/>
<line x1="786.5" y1="351.9" x2="744.5" y2="336.7" stroke="#d6d6d6" stroke-width="2.6"/>
<line x1="775.6" y1="322.3" x2="768.8" y2="368.3" stroke="#d6d6d6" stroke-width="2.6"/>
<line x1="726.8" y1="353.7" x2="682.1" y2="406.7" stroke="#d6d6d6" stroke-width="2.6"/>
<line x1="682.1" y1="406.7" x2="623.2" y2="413.3" stroke="#d6d6d6" stroke-width="2.6"/>
<line x1="682.1" y1="406.7" x2="731.4" y2="454.2" stroke="#d6d6d6" stroke-width="2.6"/>
<line x1="731.4" y1="454.2" x2="778.9" y2="388" stroke="#d6d6d6" stroke-width="2.6"/>
<line x1="731.4" y1="454.2" x2="713.7" y2="474.5" stroke="#d6d6d6" stroke-width="2.6"/>
<line x1="731.4" y1="454.2" x2="773.8" y2="504.5" stroke="#d6d6d6" stroke-width="2.6"/>
<line x1="833" y1="464.4" x2="773.8" y2="504.5" stroke="#d6d6d6" stroke-width="2.6"/>
<line x1="773.8" y1="504.5" x2="743.5" y2="514.6" stroke="#d6d6d6" stroke-width="2.6"/>
<line x1="773.8" y1="504.5" x2="792.8" y2="574.8" stroke="#d6d6d6" stroke-width="2.6"/>
<line x1="792.8" y1="574.8" x2="740.7" y2="616.5" stroke="#d6d6d6" stroke-width="2.6"/>
<line x1="740.7" y1="616.5" x2="694.8" y2="600.8" stroke="#d6d6d6" stroke-width="2.6"/>
<line x1="792.8" y1="574.8" x2="860.3" y2="600" stroke="#d6d6d6" stroke-width="2.6"/>
<line x1="860.3" y1="600" x2="896.9" y2="573" stroke="#d6d6d6" stroke-width="2.6"/>
<line x1="860.3" y1="600" x2="875" y2="666.5" stroke="#d6d6d6" stroke-width="2.6"/>
<line x1="875" y1="666.5" x2="921" y2="682.8" stroke="#d6d6d6" stroke-width="2.6"/>
<line x1="740.7" y1="616.5" x2="754.9" y2="683.3" stroke="#d6d6d6" stroke-width="2.6"/>
<line x1="754.9" y1="683.3" x2="718.8" y2="711" stroke="#d6d6d6" stroke-width="2.6"/>
<line x1="754.9" y1="683.3" x2="822.4" y2="707.5" stroke="#d6d6d6" stroke-width="2.6"/>
<line x1="822.4" y1="707.5" x2="875" y2="666.5" stroke="#d6d6d6" stroke-width="2.6"/>
<line x1="822.4" y1="707.5" x2="832.5" y2="751.5" stroke="#d6d6d6" stroke-width="2.6"/>
<line x1="1316" y1="51.5" x2="1303.4" y2="97" stroke="#686868" stroke-width="4"/>
<line x1="1201" y1="78.5" x2="1236" y2="112.9" stroke="#686868" stroke-width="4"/>
<line x1="1303.4" y1="97" x2="1236" y2="112.9" stroke="#686868" stroke-width="4"/>
<line x1="1303.4" y1="97" x2="1354" y2="147.5" stroke="#686868" stroke-width="4"/>
<line x1="1354" y1="147.5" x2="1400.7" y2="136.1" stroke="#686868" stroke-width="4"/>
<line x1="1354" y1="147.5" x2="1336.3" y2="215" stroke="#686868" stroke-width="4"/>
<line x1="1236" y1="112.9" x2="1218.8" y2="180.3" stroke="#686868" stroke-width="4"/>
<line x1="1218.8" y1="180.3" x2="1172" y2="190.5" stroke="#686868" stroke-width="4"/>
<line x1="1218.8" y1="180.3" x2="1268" y2="231" stroke="#686868" stroke-width="4"/>
<line x1="1336.3" y1="215" x2="1268" y2="231" stroke="#686868" stroke-width="4"/>
<line x1="1336.3" y1="215" x2="1371.6" y2="248.3" stroke="#686868" stroke-width="4"/>
<line x1="1268" y1="231" x2="1245.3" y2="306" stroke="#686868" stroke-width="4"/>
<line x1="1245.3" y1="306" x2="1202.3" y2="312.2" stroke="#686868" stroke-width="4"/>
<line x1="1202.3" y1="312.2" x2="1186" y2="268.5" stroke="#686868" stroke-width="4"/>
<line x1="1202.3" y1="312.2" x2="1150.2" y2="373.5" stroke="#686868" stroke-width="4"/>
<line x1="1150.2" y1="373.5" x2="1193.5" y2="417" stroke="#686868" stroke-width="4"/>
<line x1="1245.3" y1="306" x2="1303" y2="355.2" stroke="#686868" stroke-width="4"/>
<line x1="1202.3" y1="312.2" x2="1246.6" y2="362" stroke="#686868" stroke-width="4"/>
<line x1="1216.2" y1="321.6" x2="1245.3" y2="306" stroke="#686868" stroke-width="4"/>
<line x1="1246.6" y1="362" x2="1193.5" y2="417" stroke="#686868" stroke-width="4"/>
<line x1="1246.6" y1="362" x2="1316" y2="371.1" stroke="#686868" stroke-width="4"/>
<line x1="1316" y1="371.1" x2="1371.6" y2="322.3" stroke="#686868" stroke-width="4"/>
<line x1="1371.6" y1="322.3" x2="1357.2" y2="274.3" stroke="#686868" stroke-width="4"/>
<line x1="1371.6" y1="322.3" x2="1415.4" y2="329.2" stroke="#686868" stroke-width="4"/>
<line x1="1381.7" y1="341.3" x2="1426.7" y2="290.8" stroke="#686868" stroke-width="4"/>
<line x1="1426.7" y1="290.8" x2="1467.7" y2="299.6" stroke="#686868" stroke-width="4"/>
<line x1="1252.9" y1="345" x2="1211.2" y2="343.8" stroke="#686868" stroke-width="4"/>
<line x1="1252.9" y1="345" x2="1312.3" y2="337.5" stroke="#686868" stroke-width="4"/>
<line x1="1312.3" y1="337.5" x2="1381.7" y2="341.3" stroke="#686868" stroke-width="4"/>
<line x1="1381.7" y1="341.3" x2="1402" y2="386.8" stroke="#686868" stroke-width="4"/>
<line x1="1184.2" y1="490.3" x2="1135.8" y2="497.6" stroke="#686868" stroke-width="4"/>
<line x1="1184.2" y1="490.3" x2="1217.9" y2="543.1" stroke="#686868" stroke-width="4"/>
<line x1="1238.5" y1="530.5" x2="1265.5" y2="584.2" stroke="#686868" stroke-width="4"/>
<line x1="1265.5" y1="584.2" x2="1279" y2="574" stroke="#686868" stroke-width="4"/>
<line x1="1265.5" y1="584.2" x2="1272.2" y2="650.2" stroke="#686868" stroke-width="4"/>
<line x1="1217.9" y1="543.1" x2="1224.7" y2="610.6" stroke="#686868" stroke-width="4"/>
<line x1="1224.7" y1="610.6" x2="1210.6" y2="620.9" stroke="#686868" stroke-width="4"/>
<line x1="1224.7" y1="610.6" x2="1251.7" y2="663.4" stroke="#686868" stroke-width="4"/>
<line x1="1251.7" y1="663.4" x2="1272.2" y2="650.2" stroke="#686868" stroke-width="4"/>
<line x1="1272.2" y1="650.2" x2="1290.7" y2="685.4" stroke="#686868" stroke-width="4"/>
<line x1="1251.7" y1="663.4" x2="1256" y2="708.9" stroke="#686868" stroke-width="4"/>
<line x1="1217.9" y1="543.1" x2="1238.5" y2="530.5" stroke="#686868" stroke-width="4"/>
<line x1="1316" y1="371.1" x2="1328" y2="406" stroke="#686868" stroke-width="4"/>
<line x1="1238.5" y1="530.5" x2="1235" y2="487" stroke="#686868" stroke-width="4"/>
<line x1="1193.5" y1="417" x2="1170" y2="440" stroke="#686868" stroke-width="4"/>
<line x1="1316" y1="51.5" x2="1303.4" y2="97" stroke="#8e8e8e" stroke-width="2"/>
<line x1="1201" y1="78.5" x2="1236" y2="112.9" stroke="#8e8e8e" stroke-width="2"/>
<line x1="1303.4" y1="97" x2="1236" y2="112.9" stroke="#8e8e8e" stroke-width="2"/>
<line x1="1303.4" y1="97" x2="1354" y2="147.5" stroke="#8e8e8e" stroke-width="2"/>
<line x1="1354" y1="147.5" x2="1400.7" y2="136.1" stroke="#8e8e8e" stroke-width="2"/>
<line x1="1354" y1="147.5" x2="1336.3" y2="215" stroke="#8e8e8e" stroke-width="2"/>
<line x1="1236" y1="112.9" x2="1218.8" y2="180.3" stroke="#8e8e8e" stroke-width="2"/>
<line x1="1218.8" y1="180.3" x2="1172" y2="190.5" stroke="#8e8e8e" stroke-width="2"/>
<line x1="1218.8" y1="180.3" x2="1268" y2="231" stroke="#8e8e8e" stroke-width="2"/>
<line x1="1336.3" y1="215" x2="1268" y2="231" stroke="#8e8e8e" stroke-width="2"/>
<line x1="1336.3" y1="215" x2="1371.6" y2="248.3" stroke="#8e8e8e" stroke-width="2"/>
<line x1="1268" y1="231" x2="1245.3" y2="306" stroke="#8e8e8e" stroke-width="2"/>
<line x1="1245.3" y1="306" x2="1202.3" y2="312.2" stroke="#8e8e8e" stroke-width="2"/>
<line x1="1202.3" y1="312.2" x2="1186" y2="268.5" stroke="#8e8e8e" stroke-width="2"/>
<line x1="1202.3" y1="312.2" x2="1150.2" y2="373.5" stroke="#8e8e8e" stroke-width="2"/>
<line x1="1150.2" y1="373.5" x2="1193.5" y2="417" stroke="#8e8e8e" stroke-width="2"/>
<line x1="1245.3" y1="306" x2="1303" y2="355.2" stroke="#8e8e8e" stroke-width="2"/>
<line x1="1202.3" y1="312.2" x2="1246.6" y2="362" stroke="#8e8e8e" stroke-width="2"/>
<line x1="1216.2" y1="321.6" x2="1245.3" y2="306" stroke="#8e8e8e" stroke-width="2"/>
<line x1="1246.6" y1="362" x2="1193.5" y2="417" stroke="#8e8e8e" stroke-width="2"/>
<line x1="1246.6" y1="362" x2="1316" y2="371.1" stroke="#8e8e8e" stroke-width="2"/>
<line x1="1316" y1="371.1" x2="1371.6" y2="322.3" stroke="#8e8e8e" stroke-width="2"/>
<line x1="1371.6" y1="322.3" x2="1357.2" y2="274.3" stroke="#8e8e8e" stroke-width="2"/>
<line x1="1371.6" y1="322.3" x2="1415.4" y2="329.2" stroke="#8e8e8e" stroke-width="2"/>
<line x1="1381.7" y1="341.3" x2="1426.7" y2="290.8" stroke="#8e8e8e" stroke-width="2"/>
<line x1="1426.7" y1="290.8" x2="1467.7" y2="299.6" stroke="#8e8e8e" stroke-width="2"/>
<line x1="1252.9" y1="345" x2="1211.2" y2="343.8" stroke="#8e8e8e" stroke-width="2"/>
<line x1="1252.9" y1="345" x2="1312.3" y2="337.5" stroke="#8e8e8e" stroke-width="2"/>
<line x1="1312.3" y1="337.5" x2="1381.7" y2="341.3" stroke="#8e8e8e" stroke-width="2"/>
<line x1="1381.7" y1="341.3" x2="1402" y2="386.8" stroke="#8e8e8e" stroke-width="2"/>
<line x1="1184.2" y1="490.3" x2="1135.8" y2="497.6" stroke="#8e8e8e" stroke-width="2"/>
<line x1="1184.2" y1="490.3" x2="1217.9" y2="543.1" stroke="#8e8e8e" stroke-width="2"/>
<line x1="1238.5" y1="530.5" x2="1265.5" y2="584.2" stroke="#8e8e8e" stroke-width="2"/>
<line x1="1265.5" y1="584.2" x2="1279" y2="574" stroke="#8e8e8e" stroke-width="2"/>
<line x1="1265.5" y1="584.2" x2="1272.2" y2="650.2" stroke="#8e8e8e" stroke-width="2"/>
<line x1="1217.9" y1="543.1" x2="1224.7" y2="610.6" stroke="#8e8e8e" stroke-width="2"/>
<line x1="1224.7" y1="610.6" x2="1210.6" y2="620.9" stroke="#8e8e8e" stroke-width="2"/>
<line x1="1224.7" y1="610.6" x2="1251.7" y2="663.4" stroke="#8e8e8e" stroke-width="2"/>
<line x1="1251.7" y1="663.4" x2="1272.2" y2="650.2" stroke="#8e8e8e" stroke-width="2"/>
<line x1="1272.2" y1="650.2" x2="1290.7" y2="685.4" stroke="#8e8e8e" stroke-width="2"/>
<line x1="1251.7" y1="663.4" x2="1256" y2="708.9" stroke="#8e8e8e" stroke-width="2"/>
<line x1="1217.9" y1="543.1" x2="1238.5" y2="530.5" stroke="#8e8e8e" stroke-width="2"/>
<line x1="1316" y1="371.1" x2="1328" y2="406" stroke="#8e8e8e" stroke-width="2"/>
<line x1="1238.5" y1="530.5" x2="1235" y2="487" stroke="#8e8e8e" stroke-width="2"/>
<line x1="1193.5" y1="417" x2="1170" y2="440" stroke="#8e8e8e" stroke-width="2"/>
<line x1="975" y1="386.3" x2="992" y2="386.5" stroke="#e04040" stroke-width="1"/>
<path d="M1005 385.5 h8 M1017 385.5 h16 M1038 384.5 h15 M1057 384.5 h3 M1063 383.5 h12" stroke="#e8d0ff" stroke-width="1" fill="none"/>
<path d="M1005 384.5 h8 M1017 384.5 h16 M1038 383.5 h15 M1057 383.5 h3 M1063 382.5 h12" stroke="#e03838" stroke-width="1" fill="none"/>
<line x1="1100" y1="381" x2="1140" y2="375" stroke="#e8e874" stroke-width="3.5"/>
<circle cx="801.6" cy="139.2" r="7" fill="url(#gH)"/>
<circle cx="754.6" cy="163.2" r="7" fill="url(#gH)"/>
<circle cx="766.8" cy="199.8" r="14.5" fill="url(#gC)"/>
<line x1="770.1" y1="198.2" x2="780.7" y2="193.0" stroke="#8c8c8c" stroke-width="4.5" stroke-linecap="round"/>
<circle cx="795.3" cy="185.9" r="14.5" fill="url(#gC)"/>
<circle cx="814.3" cy="239" r="14.5" fill="url(#gC)"/>
<line x1="817.6" y1="237.5" x2="828.4" y2="232.5" stroke="#8c8c8c" stroke-width="4.5" stroke-linecap="round"/>
<circle cx="833.7" cy="230.1" r="7" fill="url(#gH)"/>
<circle cx="744.5" cy="250.3" r="7" fill="url(#gH)"/>
<circle cx="756.7" cy="268" r="14.5" fill="url(#gC)"/>
<circle cx="673.8" cy="268.8" r="7" fill="url(#gH)"/>
<circle cx="723" cy="281.4" r="14.5" fill="url(#gC)"/>
<line x1="726.4" y1="280.1" x2="737.4" y2="275.7" stroke="#8c8c8c" stroke-width="4.5" stroke-linecap="round"/>
<circle cx="804.2" cy="307.2" r="14.5" fill="url(#gC)"/>
<circle cx="775.6" cy="322.3" r="14.5" fill="url(#gC)"/>
<line x1="778.8" y1="320.6" x2="789.3" y2="315.1" stroke="#8c8c8c" stroke-width="4.5" stroke-linecap="round"/>
<circle cx="845.1" cy="315.3" r="7" fill="url(#gH)"/>
<line x1="845.1" y1="318.4" x2="845.1" y2="323.3" stroke="#a4a4a4" stroke-width="4.6"/>
<line x1="845.1" y1="318.4" x2="845.1" y2="323.3" stroke="#e0e0e0" stroke-width="2.6"/>
<circle cx="936.1" cy="326.6" r="7" fill="url(#gH)"/>
<circle cx="744.5" cy="336.7" r="7" fill="url(#gH)"/>
<circle cx="817.3" cy="343.6" r="6" fill="url(#gH)"/>
<circle cx="845.1" cy="340.5" r="14.5" fill="url(#gC)"/>
<circle cx="786.5" cy="351.9" r="14.5" fill="url(#gC)"/>
<line x1="785.2" y1="358.3" x2="783.3" y2="367.1" stroke="#a4a4a4" stroke-width="4.6"/>
<line x1="785.2" y1="358.3" x2="783.3" y2="367.1" stroke="#e0e0e0" stroke-width="2.6"/>
<circle cx="726.8" cy="353.7" r="14" fill="url(#gN)"/>
<circle cx="768.8" cy="368.3" r="7" fill="url(#gH)"/>
<circle cx="913.3" cy="364.5" r="14.5" fill="url(#gC)"/>
<circle cx="864.8" cy="367.1" r="7" fill="url(#gH)"/>
<line x1="863.6" y1="370.0" x2="861.7" y2="374.5" stroke="#a4a4a4" stroke-width="4.6"/>
<line x1="863.6" y1="370.0" x2="861.7" y2="374.5" stroke="#e0e0e0" stroke-width="2.6"/>
<circle cx="956.8" cy="386" r="13" fill="url(#gOp)"/>
<circle cx="998.3" cy="386.7" r="6.8" fill="url(#gHw)"/>
<circle cx="778.9" cy="388" r="14.5" fill="url(#gC)"/>
<circle cx="623.2" cy="413.3" r="13" fill="url(#gO)"/>
<circle cx="682.1" cy="406.7" r="14.5" fill="url(#gC)"/>
<circle cx="847.6" cy="407.5" r="14.5" fill="url(#gC)"/>
<circle cx="902" cy="426.5" r="14.5" fill="url(#gC)"/>
<circle cx="945.7" cy="438.6" r="7" fill="url(#gH)"/>
<circle cx="833" cy="464.4" r="13" fill="url(#gO)"/>
<circle cx="731.4" cy="454.2" r="14.5" fill="url(#gC)"/>
<circle cx="885.5" cy="466.9" r="7" fill="url(#gH)"/>
<circle cx="713.7" cy="474.5" r="7" fill="url(#gH)"/>
<line x1="714.9" y1="473.2" x2="719.0" y2="468.5" stroke="#8c8c8c" stroke-width="4.5" stroke-linecap="round"/>
<circle cx="773.8" cy="504.5" r="14.5" fill="url(#gC)"/>
<line x1="767.6" y1="506.6" x2="759.1" y2="509.4" stroke="#a4a4a4" stroke-width="4.6"/>
<line x1="767.6" y1="506.6" x2="759.1" y2="509.4" stroke="#e0e0e0" stroke-width="2.6"/>
<circle cx="743.5" cy="514.6" r="7" fill="url(#gH)"/>
<circle cx="792.8" cy="574.8" r="14.5" fill="url(#gC)"/>
<circle cx="740.7" cy="616.5" r="14.5" fill="url(#gC)"/>
<circle cx="694.8" cy="600.8" r="7" fill="url(#gH)"/>
<circle cx="860.3" cy="600" r="14.5" fill="url(#gC)"/>
<circle cx="896.9" cy="573" r="7" fill="url(#gH)"/>
<circle cx="875" cy="666.5" r="14.5" fill="url(#gC)"/>
<circle cx="921" cy="682.8" r="7" fill="url(#gH)"/>
<circle cx="754.9" cy="683.3" r="14.5" fill="url(#gC)"/>
<circle cx="718.8" cy="711" r="7" fill="url(#gH)"/>
<circle cx="822.4" cy="707.5" r="14.5" fill="url(#gC)"/>
<circle cx="832.5" cy="751.5" r="7" fill="url(#gH)"/>
<circle cx="1316" cy="51.5" r="7" fill="url(#gh)"/>
<circle cx="1201" cy="78.5" r="7" fill="url(#gh)"/>
<circle cx="1303.4" cy="97" r="14.5" fill="url(#gc)"/>
<circle cx="1236" cy="112.9" r="14.5" fill="url(#gc)"/>
<circle cx="1354" cy="147.5" r="14.5" fill="url(#gc)"/>
<circle cx="1400.7" cy="136.1" r="7" fill="url(#gh)"/>
<circle cx="1218.8" cy="180.3" r="14.5" fill="url(#gc)"/>
<circle cx="1172" cy="190.5" r="7" fill="url(#gh)"/>
<circle cx="1336.3" cy="215" r="14.5" fill="url(#gc)"/>
<circle cx="1268" cy="231" r="14.5" fill="url(#gc)"/>
<circle cx="1371.6" cy="248.3" r="7" fill="url(#gh)"/>
<circle cx="1186" cy="268.5" r="7" fill="url(#gh)"/>
<circle cx="1357.2" cy="274.3" r="7" fill="url(#gh)"/>
<circle cx="1426.7" cy="290.8" r="13" fill="url(#go)"/>
<circle cx="1467.7" cy="299.6" r="7" fill="url(#gh)"/>
<circle cx="1245.3" cy="306" r="14.5" fill="url(#gc)"/>
<circle cx="1202.3" cy="312.2" r="14.5" fill="url(#gc)"/>
<line x1="1205.9" y1="311.7" x2="1217.6" y2="310.0" stroke="#4e4e4e" stroke-width="4" stroke-linecap="round"/>
<circle cx="1216.2" cy="321.6" r="7" fill="url(#gh)"/>
<circle cx="1415.4" cy="329.2" r="7" fill="url(#gh)"/>
<circle cx="1312.3" cy="337.5" r="14.5" fill="url(#gc)"/>
<circle cx="1381.7" cy="341.3" r="14.5" fill="url(#gc)"/>
<circle cx="1371.6" cy="322.3" r="14.5" fill="url(#gc)"/>
<circle cx="1211.2" cy="343.8" r="7" fill="url(#gh)"/>
<circle cx="1252.9" cy="345" r="14.5" fill="url(#gc)"/>
<circle cx="1246.6" cy="362" r="14.5" fill="url(#gc)"/>
<circle cx="1316" cy="371.1" r="14.5" fill="url(#gc)"/>
<circle cx="1303" cy="355.2" r="13" fill="url(#go2)"/>
<circle cx="1402" cy="386.8" r="7" fill="url(#gh)"/>
<circle cx="1150.2" cy="373.5" r="14.5" fill="url(#gH)"/>
<circle cx="1091.4" cy="382.3" r="13.2" fill="url(#gop)"/>
<circle cx="1193.5" cy="417" r="14" fill="url(#gN)"/>
<circle cx="1135.8" cy="497.6" r="7" fill="url(#gh)"/>
<circle cx="1184.2" cy="490.3" r="14.5" fill="url(#gc)"/>
<circle cx="1206.8" cy="491.2" r="7" fill="url(#gh)"/>
<circle cx="1217.9" cy="543.1" r="14.5" fill="url(#gc)"/>
<line x1="1221.0" y1="541.2" x2="1231.1" y2="535.0" stroke="#4e4e4e" stroke-width="4" stroke-linecap="round"/>
<circle cx="1238.5" cy="530.5" r="14.5" fill="url(#gc)"/>
<circle cx="1265.5" cy="584.2" r="14.5" fill="url(#gc)"/>
<line x1="1268.4" y1="582.0" x2="1277.9" y2="574.9" stroke="#4e4e4e" stroke-width="4" stroke-linecap="round"/>
<circle cx="1279" cy="574" r="7" fill="url(#gh)"/>
<circle cx="1210.6" cy="620.9" r="7" fill="url(#gh)"/>
<circle cx="1224.7" cy="610.6" r="14.5" fill="url(#gc)"/>
<circle cx="1251.7" cy="663.4" r="14.5" fill="url(#gc)"/>
<line x1="1254.7" y1="661.4" x2="1264.7" y2="655.0" stroke="#4e4e4e" stroke-width="4" stroke-linecap="round"/>
<circle cx="1272.2" cy="650.2" r="14.5" fill="url(#gc)"/>
<circle cx="1290.7" cy="685.4" r="7" fill="url(#gh)"/>
<circle cx="1256" cy="708.9" r="7" fill="url(#gh)"/>
</svg>
<svg class="a" style="left:550px;top:34px" width="60" height="72" viewBox="550 34 60 72">
<line x1="564" y1="88.5" x2="564" y2="62" stroke="#b0b0b0" stroke-width="1"/>
<polygon points="564.5,52 560.5,64 568.5,64" fill="#e8e8e8"/>
<line x1="564" y1="88.5" x2="576" y2="83" stroke="#b0b0b0" stroke-width="1"/>
<circle cx="578" cy="81.5" r="3" fill="#808080"/><polygon points="577,78.5 584,78 580,82" fill="#e8e8e8"/>
<line x1="564" y1="88.5" x2="582" y2="94.5" stroke="#b0b0b0" stroke-width="1"/>
<polygon points="581,92 583,97 591,97.5 585,91" fill="#e8e8e8"/>
<text x="561" y="48" font-family="Liberation Sans" font-size="10.5" fill="#d8d8d8">b</text>
<text x="587.5" y="79" font-family="Liberation Sans" font-size="10.5" fill="#d8d8d8">a</text>
<text x="596" y="102" font-family="Liberation Sans" font-size="10.5" fill="#d8d8d8">c</text>
</svg>
<svg class="a" style="left:508px;top:725px" width="40" height="93" viewBox="508 725 40 93"><defs>
<radialGradient id="gC2" cx="0.55" cy="0.35" fx="0.55" fy="0.35" r="0.7"><stop offset="0" stop-color="#ffffff"/><stop offset="0.12" stop-color="#e0e0e0"/><stop offset="0.55" stop-color="#b0b0b0"/><stop offset="0.85" stop-color="#808080"/><stop offset="1" stop-color="#606060"/></radialGradient>
</defs>
<circle cx="519" cy="738.8" r="9.2" fill="url(#gN)"/>
<text x="528" y="743.3" font-family="Liberation Sans" font-size="11" fill="#e8e8e8">N</text>
<circle cx="519" cy="762" r="9.2" fill="url(#gO)"/>
<text x="528" y="766.5" font-family="Liberation Sans" font-size="11" fill="#e8e8e8">O</text>
<circle cx="519" cy="785" r="9.2" fill="url(#gH)"/>
<text x="528" y="789.5" font-family="Liberation Sans" font-size="11" fill="#e8e8e8">H</text>
<circle cx="519" cy="808" r="9.2" fill="url(#gC2)"/>
<text x="528" y="812.5" font-family="Liberation Sans" font-size="11" fill="#e8e8e8">C</text>
</svg>
<div class="a" style="left:1094px;top:406px;width:456px;height:81px;background:#fff;border:1px solid #767676"></div>
<div class="t" style="left:1100px;top:411px;color:#575757;font-weight:bold;">"O2"</div>
<div class="t" style="left:1100px;top:426px;color:#575757;">0.01781(15), 0.24607(9), 0.37314(11)</div>
<div class="t" style="left:1100px;top:441px;color:#575757;">&lt;&lt; m_ulExploreFlags = 00000103 &gt;&gt;</div>
<div class="t" style="left:1100px;top:456px;color:#575757;">Contact sphere with 1 H..A bond(s), 0 D..A contact(s), and 0 non-bonding contact(s)</div>
<div class="t" style="left:1100px;top:471px;color:#575757;">Currently connected: 2 atom(s) [H1O1]</div>
</body></html>
